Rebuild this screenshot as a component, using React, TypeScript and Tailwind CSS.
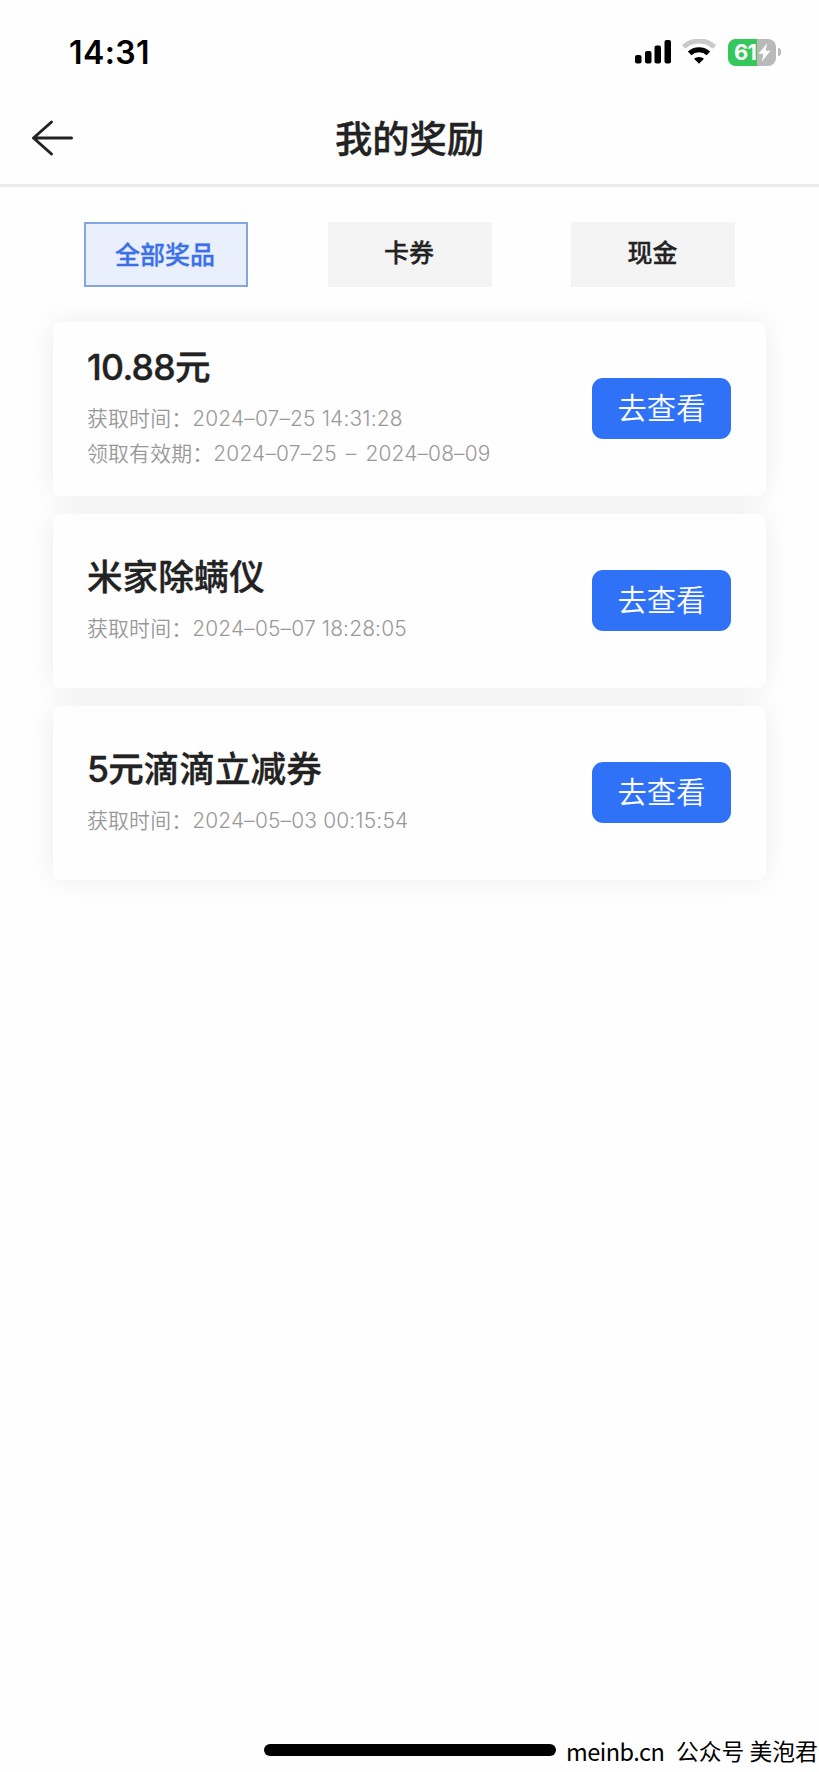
const tabs = ['全部奖品', '卡券', '现金'];

const rewards = [
  {
    amount: '10.88',
    title: '元',
    lines: ['获取时间：2024–07–25 14:31:28', '领取有效期：2024–07–25 – 2024–08–09'],
  },
  {
    amount: '',
    title: '米家除螨仪',
    lines: ['获取时间：2024–05–07 18:28:05'],
  },
  {
    amount: '5',
    title: '元滴滴立减券',
    lines: ['获取时间：2024–05–03 00:15:54'],
  },
];

function StatusBar() {
  return (
    <div className="flex h-[104px] items-center justify-between pl-[69px] pr-[38px]">
      <span className="pt-[2px] text-[32px] font-semibold leading-none tracking-[0.4px] text-black">14:31</span>
      <div className="flex items-center">
        {/* Signal */}
        <svg className="mr-[9px] h-[26px] w-[38px]" viewBox="0 0 38 26" fill="#000">
          <rect x="1" y="16" width="6.5" height="8.5" rx="2" />
          <rect x="11" y="12" width="6.5" height="12.5" rx="2" />
          <rect x="20.5" y="6.5" width="6.5" height="18" rx="2" />
          <rect x="30.5" y="1" width="6.5" height="23.5" rx="2" />
        </svg>
        {/* Wi-Fi */}
        <svg className="mr-[11px] h-[26px] w-[36px]" viewBox="0 0 36 26" fill="none">
          <path d="M2.6 8 A22.5 22.5 0 0 1 33.4 8" stroke="#c9c9c9" strokeWidth="5" />
          <path d="M8.6 14.4 A13.6 13.6 0 0 1 27.4 14.4" stroke="#000" strokeWidth="5" />
          <path d="M13 19.8 A7.6 7.6 0 0 1 23 19.8 L18 24.8 Z" fill="#000" />
        </svg>
        {/* Battery */}
        <div className="relative flex h-[27px] w-[48px] items-center overflow-hidden rounded-[8px] bg-[#b9b9b9]">
          <div className="absolute inset-y-0 left-0 w-[29px] bg-[#34c759]" />
          <span className="relative ml-[6px] text-[22px] font-bold leading-[28px] tracking-[-0.8px] text-white">61</span>
          <svg className="absolute left-[30px] top-[4px] h-[19px] w-[13px]" viewBox="0 0 12 18" fill="#fff">
            <path d="M8.6 0.3 L0.2 10.2 H5 L3.4 17.7 L11.8 7.4 H7 Z" />
          </svg>
        </div>
        <div className="ml-[2px] h-[8px] w-[3px] rounded-r-full bg-[#b9b9b9]" />
      </div>
    </div>
  );
}

export default function App() {
  return (
    <div className="flex h-[1772px] w-[819px] flex-col overflow-hidden bg-[#fefefe] font-['Inter','Noto_Sans_CJK_SC',sans-serif] text-[#222]">
      <StatusBar />

      {/* Title bar */}
      <header className="grid h-[83px] grid-cols-[1fr_auto_1fr] items-center border-b-[3px] border-[#ebebeb] pb-[12px]">
        <svg
          className="ml-[30px] h-[38px] w-[44px]"
          viewBox="0 0 44 38"
          fill="none"
          stroke="#222"
          strokeWidth="3"
          strokeLinecap="round"
          strokeLinejoin="round"
        >
          <path d="M21.5 3 L3.5 19 L21.5 35 M3.5 19 H41.5" />
        </svg>
        <h1 className="pt-[4px] text-[37.3px] font-medium leading-none [-webkit-text-stroke:0.4px_#222]">我的奖励</h1>
      </header>

      {/* Tabs */}
      <nav className="mt-[35px] flex justify-between px-[84px]">
        {tabs.map((tab, i) => (
          <button
            key={tab}
            className={
              i === 0
                ? 'h-[65px] w-[164px] border-2 border-[#83a5e3] bg-[#e9effd] pr-[2px] pt-[2px] text-[25px] font-medium leading-none text-[#3a70e8] [-webkit-text-stroke:0.3px_#3a70e8]'
                : 'h-[65px] w-[164px] bg-[#f4f4f4] pb-[2px] pr-[1px] text-[25px] font-medium leading-none [-webkit-text-stroke:0.3px_#222]'
            }
          >
            {tab}
          </button>
        ))}
      </nav>

      {/* Rewards */}
      <main className="mt-[34.5px] flex flex-col gap-[17.5px] px-[53px]">
        {rewards.map((reward) => (
          <div
            key={reward.title}
            className="flex h-[174.5px] items-center justify-between rounded-[8px] bg-[#fefefe] pl-[34px] pr-[35px] shadow-[0_0_28px_rgba(0,0,0,0.07)]"
          >
            <div>
              <h2 className="mb-[12px] text-[35.6px] font-medium leading-[44px] [-webkit-text-stroke:0.4px_#222]">
                <span className="tracking-[-0.7px]">{reward.amount}</span>
                {reward.title}
              </h2>
              {reward.lines.map((line) => (
                <p
                  key={line}
                  className="whitespace-nowrap text-[20.9px] font-[350] leading-[34.5px] tracking-[0.17px] text-[#999] nth-3:[word-spacing:3px]"
                >
                  {line}
                </p>
              ))}
            </div>
            <button className="h-[61px] w-[139px] rounded-[11px] bg-[#2f72f8] text-[29.3px] font-[350] leading-none text-white">
              去查看
            </button>
          </div>
        ))}
      </main>

      {/* Home indicator */}
      <footer className="mt-auto flex h-[42px] items-center pb-[2px] pl-[264px]">
        <div className="h-[12px] w-[292px] shrink-0 rounded-full bg-black" />
        <p className="ml-[10px] flex items-center whitespace-nowrap pt-[3px] font-['Noto_Sans_CJK_SC',sans-serif] text-[22.8px] leading-none text-black">
          <span className="w-[110px] text-[23.5px] tracking-[-0.5px]">meinb.cn</span>
          <span>公众号 美泡君</span>
        </p>
      </footer>
    </div>
  );
}
